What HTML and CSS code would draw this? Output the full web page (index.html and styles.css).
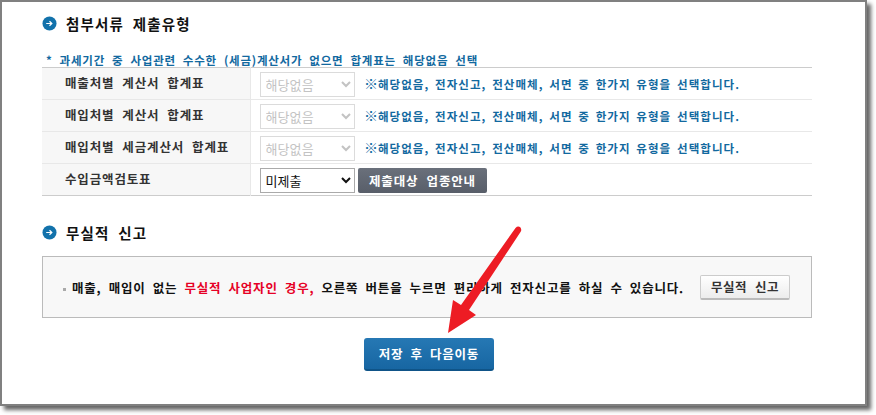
FILE: index.html
```html
<!DOCTYPE html>
<html lang="ko">
<head>
    <meta charset="UTF-8">
    <title>첨부서류 제출유형</title>
    <link rel="stylesheet" href="styles.css">
</head>
<body>

<div class="frame">
    <!-- 첨부서류 -->
    <h2 class="section-title first">
        <svg class="bullet" viewBox="0 0 16 16"><circle cx="8" cy="8" r="7.5" fill="#1272ab"/><path d="M4.5 8h6M8 5.6 10.5 8 8 10.4" fill="none" stroke="#fff" stroke-width="1.3"/></svg>
        첨부서류 제출유형
    </h2>
    <p class="notice">* 과세기간 중 사업관련 수수한 (세금)계산서가 없으면 합계표는 해당없음 선택</p>
    <table class="doc-table">
        <tr>
            <th>매출처별 계산서 합계표</th>
            <td>
                <select disabled><option>해당없음</option></select>
                <span class="hint"><span class="mark">※</span>해당없음, 전자신고, 전산매체, 서면 중 한가지 유형을 선택합니다.</span>
            </td>
        </tr>
        <tr>
            <th>매입처별 계산서 합계표</th>
            <td>
                <select disabled><option>해당없음</option></select>
                <span class="hint"><span class="mark">※</span>해당없음, 전자신고, 전산매체, 서면 중 한가지 유형을 선택합니다.</span>
            </td>
        </tr>
        <tr>
            <th>매입처별 세금계산서 합계표</th>
            <td>
                <select disabled><option>해당없음</option></select>
                <span class="hint"><span class="mark">※</span>해당없음, 전자신고, 전산매체, 서면 중 한가지 유형을 선택합니다.</span>
            </td>
        </tr>
        <tr>
            <th>수입금액검토표</th>
            <td>
                <select class="active"><option>미제출</option></select>
                <button class="btn-dark">제출대상 업종안내</button>
            </td>
        </tr>
    </table>

    <!-- 무실적 신고 -->
    <h2 class="section-title second">
        <svg class="bullet" viewBox="0 0 16 16"><circle cx="8" cy="8" r="7.5" fill="#1272ab"/><path d="M4.5 8h6M8 5.6 10.5 8 8 10.4" fill="none" stroke="#fff" stroke-width="1.3"/></svg>
        무실적 신고
    </h2>
    <div class="nil-box">
        <p class="nil-text"><span class="square"></span>매출, 매입이 없는 <em>무실적 사업자인 경우,</em> 오른쪽 버튼을 누르면 편리하게 전자신고를 하실 수 있습니다.</p>
        <button class="btn-light">무실적 신고</button>
    </div>

    <div class="actions">
        <button class="btn-save">저장 후 다음이동</button>
    </div>

    <!-- annotation arrow -->
    <svg class="arrow" viewBox="0 0 876 415">
        <path d="M515.5 228Q518 225.5 520.5 227.5 522 230 520.5 232L469 310 476 315 448 333 453 300 461 305Z" fill="#ed1c24"/>
    </svg>
</div>

</body>
</html>
```

FILE: styles.css
```css
html, body {
    margin: 0;
    padding: 0;
    background-color: #fff;
}
body {
    font-family: "Noto Sans CJK KR", "Liberation Sans", sans-serif;
    height: 415px;
    overflow: hidden;
}
.frame {
    width: 783px;
    height: 402px;
    border: 2px solid #808080;
    box-shadow: 4px 4px 4px rgba(0, 0, 0, 0.6);
    background-color: #fff;
    padding: 0 40px;
    position: relative;
}
.section-title {
    display: flex;
    align-items: center;
    gap: 9px;
    margin: 0;
    height: 16px;
    font-size: 14.5px;
    font-weight: 700;
    letter-spacing: 1.2px;
    word-spacing: 3.3px;
    color: #111;
}
.section-title.first {
    padding-top: 13px;
}
.section-title.second {
    margin-top: 28px;
}
.bullet {
    width: 15px;
    height: 15px;
    flex: none;
}
.notice {
    margin: 0;
    padding: 22px 0 0 4px;
    height: 14px;
    line-height: 14px;
    font-size: 11.5px;
    font-weight: 700;
    letter-spacing: 0.78px;
    word-spacing: 3px;
    color: #12699f;
}
.doc-table {
    width: 770px;
    border-collapse: collapse;
    border-top: 1px solid #ccc;
    border-bottom: 1px solid #ccc;
}
.doc-table tr + tr {
    border-top: 1px solid #e8e8e8;
}
.doc-table th {
    width: 208px;
    height: 31px;
    padding: 0 0 2px 23px;
    box-sizing: border-box;
    background-color: #f7f7f7;
    border-right: 1px solid #e8e8e8;
    text-align: left;
    white-space: nowrap;
    font-size: 12.5px;
    font-weight: 700;
    letter-spacing: 0.85px;
    word-spacing: 3.6px;
    color: #333;
}
.doc-table td {
    padding: 0 0 0 9px;
    height: 31px;
    white-space: nowrap;
}
select {
    width: 95px;
    height: 25px;
    padding: 0 0 0 1px;
    border: 1px solid #ccc;
    border-radius: 0;
    background-color: #fff;
    font-family: inherit;
    font-size: 13px;
    letter-spacing: 0.1px;
    color: #aaa;
    vertical-align: middle;
}
select.active {
    border-color: #aaa;
    color: #111;
}
.hint {
    display: inline-block;
    margin: 0 0 3px 5px;
    line-height: 14px;
    font-size: 11.5px;
    font-weight: 700;
    letter-spacing: 1.05px;
    word-spacing: 1.5px;
    color: #12699f;
    vertical-align: middle;
}
.mark {
    font-size: 14px;
    font-weight: 400;
    letter-spacing: 0;
}
.btn-dark {
    width: 129px;
    height: 25px;
    margin-left: -1px;
    padding: 0;
    border: none;
    border-radius: 2px;
    background: linear-gradient(#6a707b, #585e69);
    font-family: inherit;
    font-size: 12.5px;
    font-weight: 700;
    letter-spacing: 0.85px;
    word-spacing: 3.8px;
    color: #fff;
    vertical-align: middle;
}
.nil-box {
    display: flex;
    align-items: center;
    justify-content: space-between;
    box-sizing: border-box;
    width: 770px;
    height: 62px;
    margin-top: 16px;
    padding: 0 21px 0 20px;
    border: 1px solid #bbb;
    background-color: #f8f8f8;
}
.nil-text {
    margin: 0;
    white-space: nowrap;
    font-size: 12.5px;
    font-weight: 700;
    letter-spacing: 0.8px;
    word-spacing: 2.85px;
    color: #111;
}
.nil-text em {
    font-style: normal;
    color: #e60026;
}
.square {
    display: inline-block;
    width: 3px;
    height: 3px;
    margin-right: 6px;
    vertical-align: middle;
    background-color: #aaa;
}
.btn-light {
    flex: none;
    width: 90px;
    height: 25px;
    padding: 0;
    border: 1px solid #ccc;
    border-bottom: 2px solid #bbb;
    border-radius: 2px;
    background: linear-gradient(#fff, #ececec);
    font-family: inherit;
    font-size: 12.5px;
    font-weight: 700;
    letter-spacing: 0.6px;
    word-spacing: 3.6px;
    color: #333;
}
.actions {
    display: flex;
    justify-content: center;
    margin-top: 20px;
    padding-right: 9px;
}
.btn-save {
    width: 130px;
    height: 33px;
    padding: 0;
    border: none;
    border-bottom: 2px solid #0f5488;
    border-radius: 3px;
    background: linear-gradient(#2678b4, #1766a2);
    font-family: inherit;
    font-size: 12.5px;
    font-weight: 700;
    letter-spacing: 0.75px;
    word-spacing: 3px;
    color: #fff;
}
.arrow {
    position: absolute;
    left: -2px;
    top: -2px;
    width: 876px;
    height: 415px;
    pointer-events: none;
}
```
